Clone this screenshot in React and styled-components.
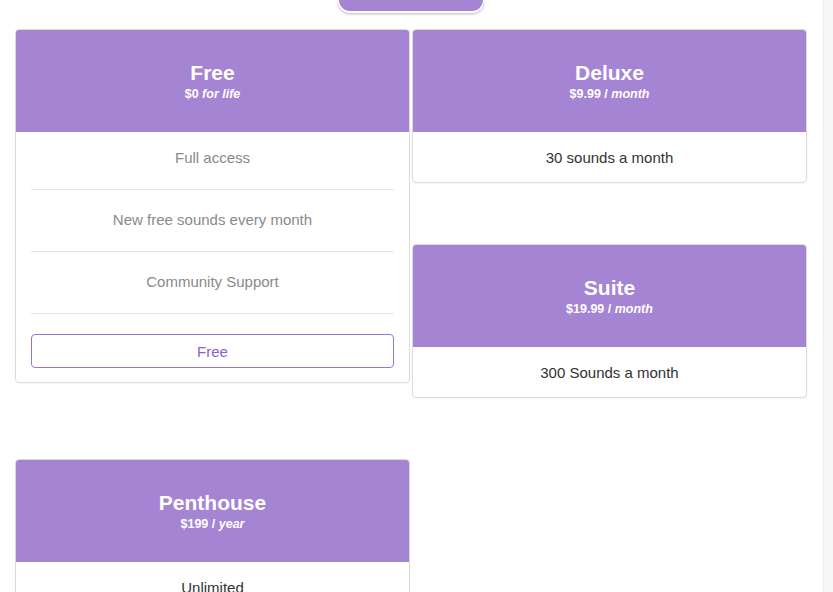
import React from 'react';
import styled, { createGlobalStyle } from 'styled-components';

const GlobalStyle = createGlobalStyle`
  html, body {
    margin: 0;
    padding: 0;
    height: 100%;
    overflow: hidden;
    background: #fff;
    font-family: "Liberation Sans", Arial, Helvetica, sans-serif;
  }
`;

const Page = styled.div`
  display: flex;
  height: 592px;
  overflow: hidden;
`;

const Main = styled.main`
  flex: 1;
  display: flex;
  flex-direction: column;
  align-items: center;
  padding: 0 16px 0 15px;
  min-height: 0;
`;

const ScrollTrack = styled.div`
  width: 10px;
  flex-shrink: 0;
  background: #f7f7f7;
  border-left: 1px solid #ebebeb;
`;

const TopTab = styled.button`
  flex-shrink: 0;
  width: 144px;
  height: 11px;
  border: none;
  padding: 0;
  background: #a684d4;
  border-radius: 0 0 14px 14px;
  box-shadow: 0 1px 0 1px #fff, 0 2px 3px 1px rgba(0, 0, 0, 0.28);
  cursor: pointer;
`;

const Columns = styled.div`
  flex-shrink: 0;
  display: flex;
  align-items: flex-start;
  gap: 2px;
  margin-top: 18px;
  width: 100%;
`;

const Column = styled.div`
  display: flex;
  flex-direction: column;
  gap: ${props => props.gap}px;
  width: 395px;
`;

const Card = styled.section`
  flex-shrink: 0;
  border: 1px solid #dcdcdc;
  border-radius: 4px;
  overflow: hidden;
  background: #fff;
  box-shadow: 0 1px 1px rgba(0, 0, 0, 0.04);
`;

const CardHeader = styled.header`
  background: #a684d4;
  color: #fff;
  text-align: center;
  padding: 31px 0 29px;
`;

const Title = styled.h2`
  margin: 0;
  font-size: 21px;
  line-height: 24px;
  font-weight: 700;
`;

const Price = styled.div`
  font-size: 12.5px;
  line-height: 18px;
  font-weight: 700;
  em {
    font-style: italic;
  }
`;

const Features = styled.ul`
  list-style: none;
  margin: 0;
  padding: 0 15px;
`;

const Feature = styled.li`
  text-align: center;
  font-size: 15px;
  line-height: 20px;
  color: ${props => (props.muted ? '#8a8a8a' : '#333')};
  padding: 20px 0 21px;
  border-bottom: 1px solid #e4e4e4;
  &:first-child {
    padding-top: 16px;
  }
  &:last-child {
    border-bottom: ${props => (props.ruled ? '1px solid #e4e4e4' : 'none')};
    padding-bottom: ${props => (props.ruled ? '21px' : '14px')};
  }
`;

const Footer = styled.div`
  padding: 20px 15px 14px;
`;

const ChooseButton = styled.button`
  width: 100%;
  height: 34px;
  background: #fff;
  border: 1px solid #9b74cd;
  border-radius: 4px;
  color: #8c62c6;
  font-family: inherit;
  font-size: 15px;
  cursor: pointer;
`;

const PlanCard = ({ name, price, period, periodItalicOnly, features, muted, button }) => (
  <Card>
    <CardHeader>
      <Title>{name}</Title>
      <Price>
        {price} {periodItalicOnly ? <em>{period}</em> : <>/ <em>{period}</em></>}
      </Price>
    </CardHeader>
    <Features>
      {features.map(f => (
        <Feature key={f} muted={muted} ruled={!!button}>{f}</Feature>
      ))}
    </Features>
    {button && (
      <Footer>
        <ChooseButton>{button}</ChooseButton>
      </Footer>
    )}
  </Card>
);

export default function App() {
  return (
    <Page>
      <GlobalStyle />
      <Main>
        <TopTab aria-label="Plans" />
        <Columns>
          <Column gap={76}>
            <PlanCard
              name="Free"
              price="$0"
              period="for life"
              periodItalicOnly
              muted
              features={['Full access', 'New free sounds every month', 'Community Support']}
              button="Free"
            />
            <PlanCard name="Penthouse" price="$199" period="year" features={['Unlimited']} />
          </Column>
          <Column gap={61}>
            <PlanCard name="Deluxe" price="$9.99" period="month" features={['30 sounds a month']} />
            <PlanCard name="Suite" price="$19.99" period="month" features={['300 Sounds a month']} />
          </Column>
        </Columns>
      </Main>
      <ScrollTrack />
    </Page>
  );
}
